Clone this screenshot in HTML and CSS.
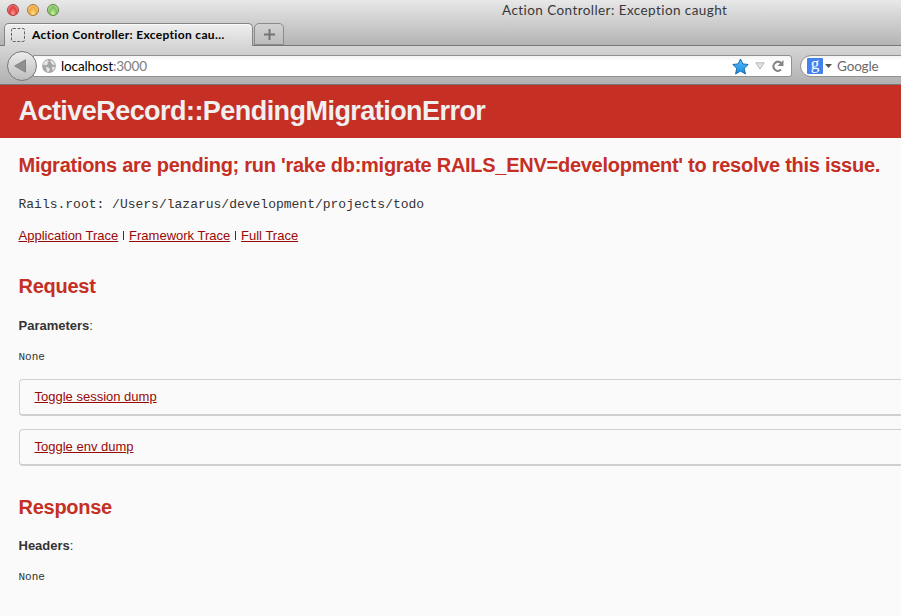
FILE: index.html
```html
<!DOCTYPE html>
<html lang="en">
<head>
<meta charset="utf-8">
<title>Action Controller: Exception caught</title>
<link rel="stylesheet" href="styles.css">
</head>
<body>
<div class="chrome">
  <div class="titlebar">
    <div class="lights"><i class="light red"></i><i class="light amber"></i><i class="light green"></i></div>
    <span class="window-title">Action Controller: Exception caught</span>
  </div>
  <div class="tabs">
    <div class="tab">
      <svg width="14" height="14" viewBox="0 0 14 14"><rect x=".5" y=".5" width="13" height="13" rx="1.5" fill="none" stroke="#666" stroke-dasharray="3 1.5"/></svg>
      <span class="tab-title">Action Controller: Exception cau…</span>
    </div>
    <div class="new-tab"><svg width="11" height="11" viewBox="0 0 11 11"><path d="M5.5 0v11M0 5.5h11" stroke="#747474" stroke-width="2"/></svg></div>
  </div>
  <div class="toolbar">
    <div class="back"><svg width="13" height="14" viewBox="0 0 13 14"><path d="M.7 7 11.5 .8v12.4z" fill="#909090" stroke="#777" stroke-width=".8"/></svg></div>
    <div class="address">
      <svg class="globe" width="14" height="14" viewBox="0 0 14 14"><circle cx="7" cy="7" r="6.9" fill="#a5a5a5"/><path d="M.8 5.500 2.500 2.500 5.500 1l1.500 1.500-1.500 1L6 5 4 6.500 2.500 6zM8.500 1l3 1.500 1.500 3-2 .5L9.500 4.500 8.500 3zM3.500 8l3 .5 1.500 1.500-1 2.800-2 0-.5-2.500zM10 7.500l3 .5-1 3-1.500.5z" fill="#e4e4e4"/></svg>
      <span class="url">localhost<span class="port">:3000</span></span>
      <svg class="star" width="17" height="17" viewBox="0 0 17 17"><defs><linearGradient id="sg" x2="0" y2="1"><stop stop-color="#57c0fa"/><stop offset="1" stop-color="#168be5"/></linearGradient></defs><path d="m8.500 1 2.300 4.900 5.400.6-4 3.800 1.200 5.600-4.900-2.800-4.900 2.800 1.200-5.600-4-3.800 5.400-.6z" fill="url(#sg)" stroke="#1b67aa" stroke-linejoin="round"/></svg>
      <svg class="drop" width="10" height="8" viewBox="0 0 10 8"><path d="M.8 .8h8.400L5 7z" fill="#e3e3e3" stroke="#b4b4b4"/></svg>
      <svg class="reload" width="12" height="12" viewBox="0 0 12 12"><path d="M9 9.600A4.500 4.500 0 1 1 8 2.200L9.500 3.500" fill="none" stroke="#858585" stroke-width="2"/><path d="M11.500 0v6h-6z" fill="#858585"/></svg>
    </div>
    <div class="search">
      <span class="engine">g</span>
      <svg width="7" height="4" viewBox="0 0 7 4"><path d="M0 0h7L3.500 4z" fill="#555"/></svg>
      <span class="search-label">Google</span>
    </div>
  </div>
</div>
<header><h1>ActiveRecord::PendingMigrationError</h1></header>
<main>
  <h2 class="message">Migrations are pending; run 'rake db:migrate RAILS_ENV=development' to resolve this issue.</h2>
  <code class="root">Rails.root: /Users/lazarus/development/projects/todo</code>
  <p class="traces"><a>Application Trace</a> <i class="bar"></i> <a>Framework Trace</a> <i class="bar"></i> <a>Full Trace</a></p>
  <h2 class="section">Request</h2>
  <p class="label"><b>Parameters</b>:</p>
  <pre>None</pre>
  <div class="details"><a>Toggle session dump</a></div>
  <div class="details"><a>Toggle env dump</a></div>
  <h2 class="section">Response</h2>
  <p class="label headers"><b>Headers</b>:</p>
  <pre>None</pre>
</main>
</body>
</html>
```
FILE: styles.css
```css
* { box-sizing: border-box; }
body { margin: 0; height: 616px; overflow: hidden; background: #fafafa; color: #333; font: 13px/18px "Liberation Sans", Arial, sans-serif; }
h1, h2, p, pre { margin: 0; }

.chrome { height: 85px; font-family: "Lato", "Open Sans", sans-serif; background: linear-gradient(#e8e8e8, #b4b4b4 45px); }
.titlebar { height: 23px; display: flex; }
.lights { display: flex; gap: 8px; padding: 4px 0 0 7px; width: 502px; }
.light { width: 12px; height: 12px; border-radius: 50%; border: 1px solid; }
.red { background: radial-gradient(ellipse at 50% 85%, #ff9a90, #e23d43 50%, #f8b3b0 95%); border-color: #a5403f; }
.amber { background: radial-gradient(ellipse at 50% 85%, #ffe58a, #efa93c 50%, #fbe0b0 95%); border-color: #a8743a; }
.green { background: radial-gradient(ellipse at 50% 85%, #d2f5a2, #80bf5c 50%, #d8efc8 95%); border-color: #58883f; }
.window-title { font-size: 13.500px; line-height: 21px; color: #383838; white-space: nowrap; letter-spacing: .43px; }

.tabs { height: 23px; display: flex; gap: 1px; padding-left: 4px; border-bottom: 1px solid #777; }
.tab { width: 249px; height: 23px; display: flex; align-items: center; gap: 7px; padding-left: 6px; border: 1px solid #858585; border-bottom: 0; border-radius: 5px 5px 0 0; background: linear-gradient(#efefef, #d6d6d6); box-shadow: inset 0 1px #fafafa; }
.tab-title { font-size: 12px; font-weight: 700; color: #000; white-space: nowrap; letter-spacing: .33px; }
.new-tab { width: 30px; height: 22px; display: flex; align-items: center; justify-content: center; border: 1px solid #8b8b8b; border-radius: 5px 5px 0 0; background: linear-gradient(#d2d2d2, #bcbcbc); }

.toolbar { height: 39px; display: flex; align-items: center; padding: 0 0 0 7px; background: linear-gradient(#d6d6d6, #b0b0b0); border-bottom: 1px solid #777; }
.back { width: 30px; height: 30px; display: flex; align-items: center; justify-content: center; border: 1px solid #777; border-radius: 50%; background: linear-gradient(#ececec, #bdbdbd); padding-right: 3px; z-index: 1; margin-top: 2px; }
.address { width: 759px; height: 22px; margin: 2px 8px 0 -4px; padding: 0 7px 0 8px; display: flex; align-items: center; border: 1px solid #929292; border-radius: 0 3px 3px 0; background: linear-gradient(#f4f4f4, #fff 5px); }
.url { margin-left: 5px; font-size: 13.500px; line-height: 20px; letter-spacing: -.13px; color: #000; flex: 1; }
.port { color: #7c7c7c; }
.star { margin-right: 6px; }
.drop { margin-right: 7px; }
.search { width: 130px; height: 22px; margin: 2px -29px 0 0; flex: none; padding-left: 6px; display: flex; align-items: center; border: 1px solid #929292; border-radius: 11px 0 0 11px; background: linear-gradient(#f4f4f4, #fff 5px); }
.engine { width: 16px; height: 16px; margin-right: 2px; border-radius: 1px; background: #4381ef; color: #fff; font: 17px/12px "Liberation Serif", serif; text-align: center; }
.search-label { margin-left: 5px; font-size: 13.500px; letter-spacing: -.15px; color: #6b6b6b; }

header { height: 53px; padding: 11px 18.500px; background: #c52f24; color: #f0f0f0; }
h1 { font-size: 27px; line-height: 30px; letter-spacing: -.55px; white-space: nowrap; }
main { padding: 15px 0 0 18.500px; }
h2 { color: #c52f24; font-size: 20px; line-height: 25px; letter-spacing: -.27px; white-space: nowrap; }
.root { display: block; margin-top: 18px; font: 13px/18px "Liberation Mono", monospace; }
.traces { margin-top: 13px; line-height: 18px; white-space: nowrap; }
a { color: #980905; text-decoration: underline; }
.bar { display: inline-block; width: 1px; height: 9px; margin: 0 1.300px; background: #333; }
.section { margin-top: 29px; }
.label { margin-top: 18px; }
.headers { margin-top: 17px; }
pre { margin-top: 13px; font: 11px/18px "Liberation Mono", monospace; }
.details { height: 37px; margin-bottom: 13px; padding: 8px 15px; border: 1px solid #d0d0d0; border-right: 0; border-bottom-width: 2px; border-radius: 4px 0 0 4px; }
pre + .details { margin-top: 13px; }
```
